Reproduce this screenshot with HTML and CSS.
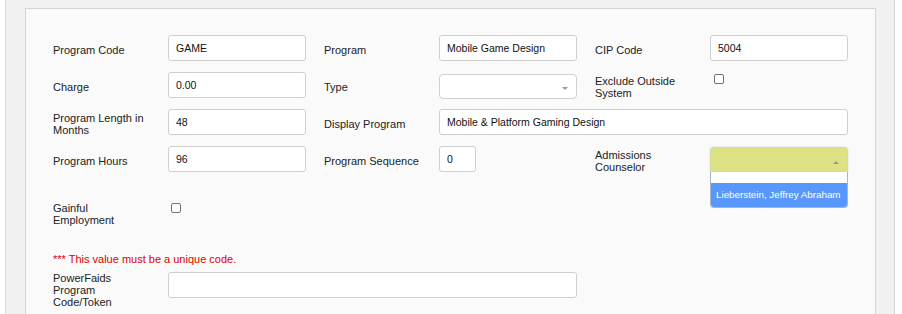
FILE: index.html
```html
<!DOCTYPE html>
<html lang="en">
<head>
    <meta charset="UTF-8">
    <title>Program Setup</title>
    <link rel="stylesheet" href="styles.css">
</head>
<body>
    <div class="page">
        <div class="panel">
            <!-- Row 1 -->
            <div class="row">
                <label class="lbl">Program Code</label>
                <input class="txt" type="text" value="GAME">
                <label class="lbl lbl-gap">Program</label>
                <input class="txt" type="text" value="Mobile Game Design">
                <label class="lbl lbl-gap">CIP Code</label>
                <input class="txt" type="text" value="5004">
            </div>

            <!-- Row 2 -->
            <div class="row">
                <label class="lbl">Charge</label>
                <input class="txt" type="text" value="0.00">
                <label class="lbl lbl-gap">Type</label>
                <div class="sel sel-type"><span class="arrow-down"></span></div>
                <label class="lbl lbl-gap">Exclude Outside System</label>
                <input class="chk chk-exclude" type="checkbox">
            </div>

            <!-- Row 3 -->
            <div class="row">
                <label class="lbl">Program Length in Months</label>
                <input class="txt" type="text" value="48">
                <label class="lbl lbl-gap">Display Program</label>
                <input class="txt span-3" type="text" value="Mobile &amp; Platform Gaming Design">
            </div>

            <!-- Row 4 -->
            <div class="row">
                <label class="lbl">Program Hours</label>
                <input class="txt" type="text" value="96">
                <label class="lbl lbl-gap">Program Sequence</label>
                <input class="txt txt-short" type="text" value="0">
                <label class="lbl lbl-gap">Admissions Counselor</label>
                <div class="sel sel-open">
                    <span class="arrow-up"></span>
                    <div class="dropdown">
                        <div class="search"></div>
                        <div class="option">Lieberstein, Jeffrey Abraham</div>
                    </div>
                </div>
            </div>

            <!-- Row 5 -->
            <div class="row row-gainful">
                <label class="lbl">Gainful Employment</label>
                <input class="chk chk-gainful" type="checkbox">
            </div>

            <p class="warn">*** This value must be a unique code.</p>

            <div class="row row-top">
                <label class="lbl">PowerFaids Program Code/Token</label>
                <input class="txt span-3" type="text" value="">
            </div>
        </div>
    </div>
</body>
</html>
```

FILE: styles.css
```css
* {
    margin: 0;
    padding: 0;
    box-sizing: border-box;
}

html, body {
    height: 100%;
    overflow: hidden;
}

body {
    background: #fff;
    font-family: 'Liberation Sans', Arial, sans-serif;
}

.page {
    margin-left: 5px;
    width: 890px;
    min-height: 100%;
    background: #f1f1f1;
    border-left: 1px solid #dcdcdc;
    border-right: 1px solid #d6d6d6;
    padding: 8px 18px 0 19px;
}

.panel {
    background: #fafafa;
    border: 1px solid #d4d4d4;
    border-bottom: none;
    padding: 26px 27px 20px;
    min-height: 330px;
}

/* Form rows */
.row {
    display: grid;
    grid-template-columns: 115px 138px 133px 138px 133px 138px;
    grid-auto-rows: 26px;
    align-items: center;
    margin-bottom: 11px;
}

.lbl {
    font-size: 11px;
    line-height: 12px;
    color: #222;
    padding: 4px 19px 0 0;
}

.lbl-gap {
    padding-left: 18px;
}

.txt {
    height: 26px;
    border: 1px solid #cfcfcf;
    border-radius: 3px;
    background: #fff;
    padding: 0 7px;
    font-family: 'Liberation Sans', Arial, sans-serif;
    font-size: 10.5px;
    color: #111;
    outline: none;
}

.txt-short {
    width: 37px;
}

.span-3 {
    grid-column: span 3;
}

/* Checkboxes */
.chk {
    appearance: none;
    -webkit-appearance: none;
    width: 10px;
    height: 10px;
    border: 1px solid #707070;
    border-radius: 2px;
    background: #fff;
    align-self: start;
}

.chk-exclude {
    margin: 2px 0 0 4px;
}

.chk-gainful {
    margin: 4px 0 0 3px;
}

/* Select boxes */
.sel {
    position: relative;
    height: 25px;
    border: 1px solid #d0d0d0;
    border-radius: 4px;
    background: #fff;
    align-self: start;
}

.sel-type {
    margin-top: 2px;
}

.arrow-down {
    position: absolute;
    right: 8px;
    top: 12px;
    border-top: 3px solid #999;
    border-left: 3px solid transparent;
    border-right: 3px solid transparent;
}

.sel-open {
    margin-top: 1px;
    background: #dde385;
    border-color: #d5dca0;
    border-radius: 4px 4px 0 0;
    box-shadow: 0 0 2px rgba(120, 150, 200, 0.35);
}

.arrow-up {
    position: absolute;
    right: 8px;
    top: 13px;
    border-bottom: 3px solid #999;
    border-left: 3px solid transparent;
    border-right: 3px solid transparent;
}

.dropdown {
    position: absolute;
    top: 24px;
    left: -1px;
    right: -1px;
    border: 1px solid #aab4c6;
    border-top: none;
    border-radius: 0 0 4px 4px;
    background: #fff;
    overflow: hidden;
    z-index: 2;
}

.search {
    height: 11px;
    background: #fff;
}

.option {
    height: 24px;
    background: #5897fb;
    color: #fff;
    font-size: 9.8px;
    line-height: 24px;
    padding-left: 5px;
    white-space: nowrap;
}

.row-gainful {
    margin-top: 27px;
}

.warn {
    margin-top: 28px;
    font-size: 11px;
    line-height: 12px;
    color: #e00000;
}

.row-top {
    margin-top: 7px;
    align-items: start;
}

.row-top .lbl {
    padding-top: 0;
}
```
